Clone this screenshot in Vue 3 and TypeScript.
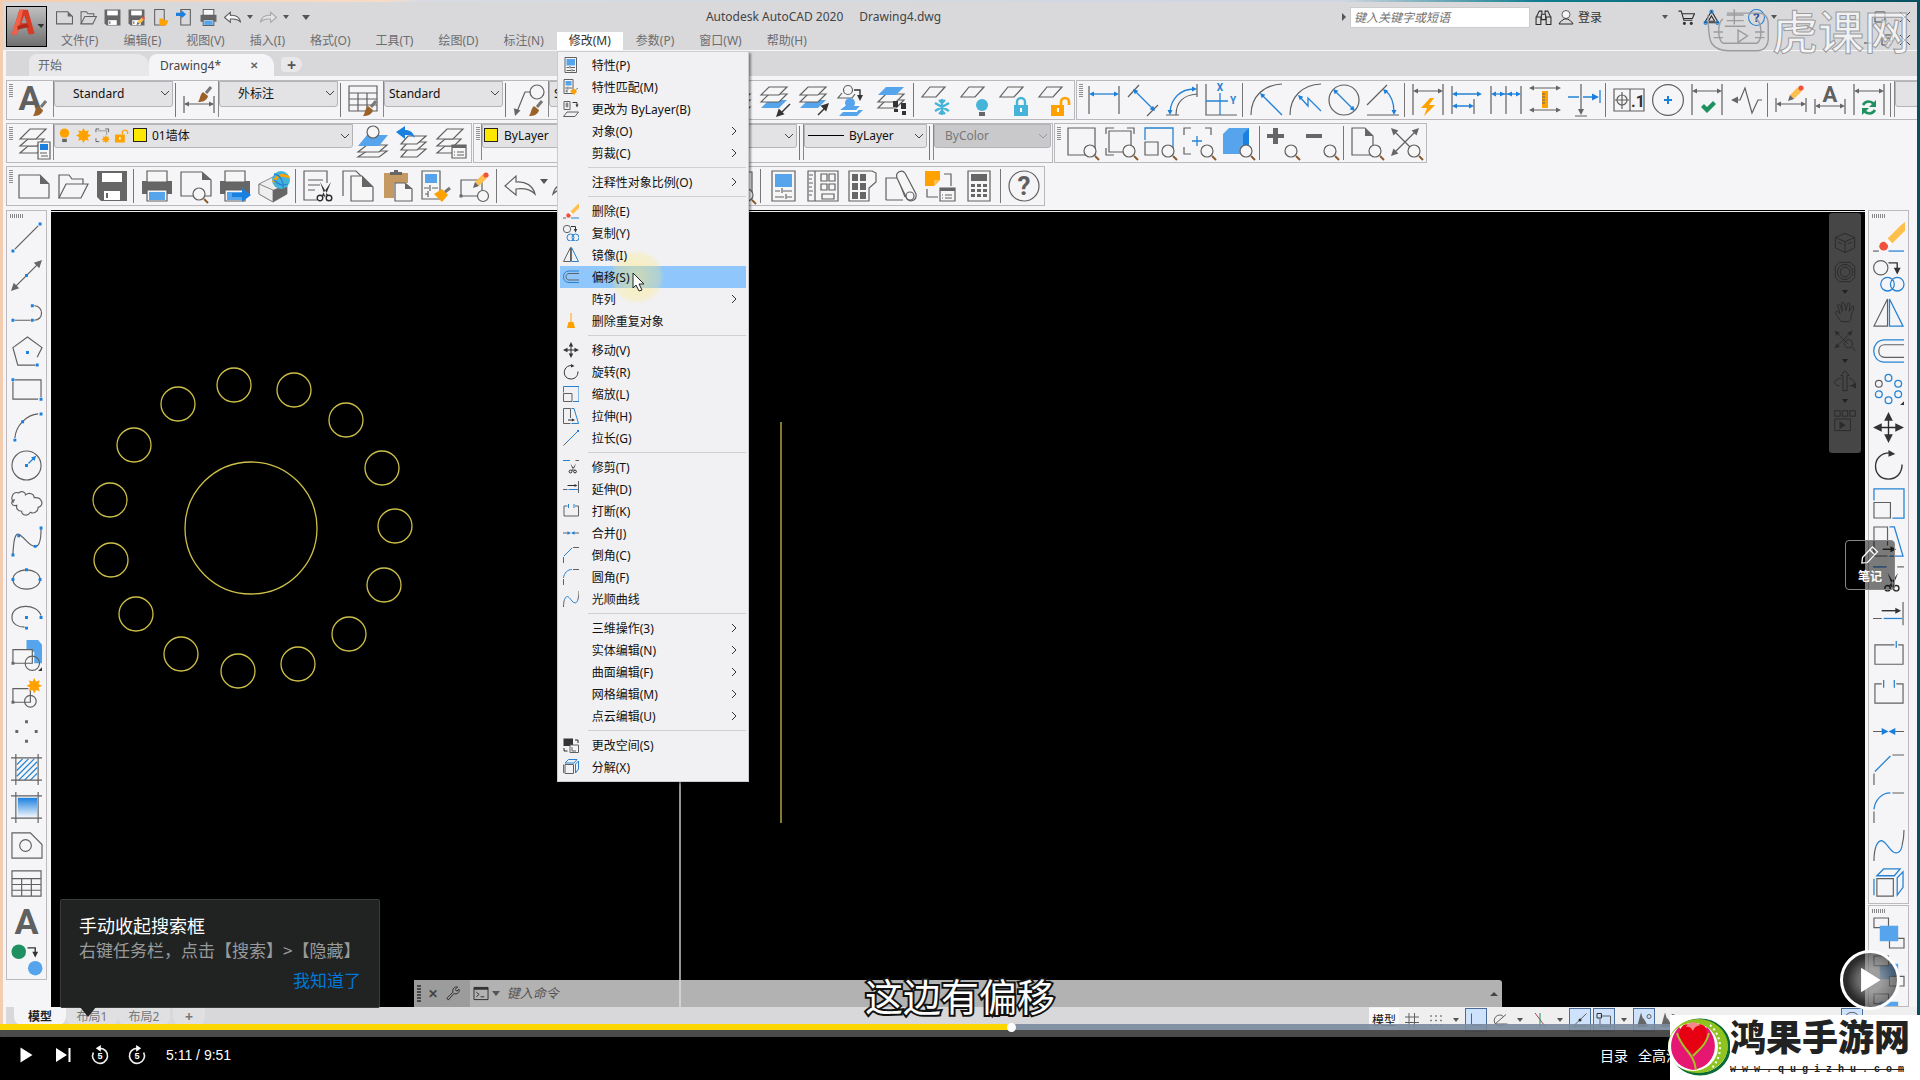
<script setup lang="ts">
import { h, ref } from 'vue'

type Shape = (string | number)[]
interface Combo { text: string; width: number; pad: number; lead?: string; disabled?: boolean }
type Tool = string | Combo
interface Entry { label: string; icon?: string; sub?: boolean; hot?: boolean }

const GREY = '#606060'
const BLUE = '#2482d4'
const paints: Record<string, Record<string, string | number>> = {
  k: { stroke: GREY, fill: 'none', 'stroke-width': 1.2 },
  d: { stroke: '#333', fill: 'none', 'stroke-width': 1.4 },
  b: { stroke: BLUE, fill: 'none', 'stroke-width': 1.3 },
  v: { stroke: '#fff', fill: 'none', 'stroke-width': 2 },
  n: { stroke: '#8a5a2a', fill: 'none', 'stroke-width': 2 },
  h: { stroke: '#777', fill: 'none', 'stroke-width': 3 },
  K: { fill: '#666' },
  D: { fill: '#333' },
  B: { fill: '#56a4ec' },
  U: { fill: '#1a80e0' },
  O: { fill: '#ffa200' },
  R: { fill: '#f0503c' },
  P: { fill: '#ffbf4d' },
  T: { fill: '#c49a62' },
  N: { fill: '#9a6128' },
  G: { fill: '#1f9160' },
  C: { fill: '#45b4d8' },
  c: { stroke: '#45b4d8', fill: 'none', 'stroke-width': 2.4 },
  o: { stroke: '#ffa200', fill: 'none', 'stroke-width': 2.6 },
  g: { stroke: '#1f9160', fill: 'none', 'stroke-width': 2.6 },
  r: { stroke: '#b04050', fill: 'none', 'stroke-width': 1.3 },
  W: { fill: '#f6f6f7', stroke: GREY, 'stroke-width': 1.2 },
  Q: { fill: '#eeeeef', stroke: '#888', 'stroke-width': 1 },
  F: { fill: '#fff' },
  m: { stroke: '#2b2b2b', fill: 'none', 'stroke-width': 1.4 },
  M: { fill: '#2b2b2b' },
}
const circ = (x: number, y: number, r: number) => `M${x - r} ${y}a${r} ${r} 0 1 0 ${2 * r} 0a${r} ${r} 0 1 0 ${-2 * r} 0z`
const head = (x: number, y: number, dx: number, dy: number, s = 5) => {
  const l = Math.hypot(dx, dy)
  const ux = (dx / l) * s
  const uy = (dy / l) * s
  return `M${x} ${y}L${x - ux - uy / 2} ${y - uy + ux / 2}L${x - ux + uy / 2} ${y - uy - ux / 2}z`
}
const dot = (x: number, y: number) => `M${x - 1.5} ${y - 1.5}h3v3h-3z`
const brush = (x: number, y: number): Shape[] => [
  ['h', `M${x + 13} ${y}L${x + 8} ${y + 6}`],
  ['N', `M${x + 5} ${y + 5}l5 4c-1 5-6 6-10 6c2-2 2-8 5-10z`],
]
const glass = (x: number, y: number, r = 6): Shape[] => [
  ['n', `M${x + r - 1} ${y + r - 1}l4 4`],
  ['W', circ(x, y, r)],
]
const pen = (x: number, y: number): Shape[] => [
  ['P', `M${x + 3} ${y + 9}L${x + 11} ${y + 1}l4 4L${x + 7} ${y + 13}z`],
  ['R', circ(x + 14, y + 2, 2.6)],
  ['K', `M${x + 3} ${y + 9}l4 4l-6 2z`],
]
const sheet = (y: number, paint = 'W'): Shape => [paint, `M10 ${y}h18l-8 8h-18z`]
const layers = (top = 'W', low = 'W'): Shape[] => [sheet(16, low), sheet(10), sheet(3, top)]
const flat: Shape = ['k', 'M9 3H24L15 13H1z']
const printer: Shape[] = [
  ['K', 'M1 11h30v13H1z'],
  ['W', 'M6 1h20v11H6z'],
  ['W', 'M6 20h20v11H6z'],
  ['B', 'M8 22h16v8H8z'],
]
const floppy: Shape[] = [
  ['K', 'M1 1h30v30H5l-4-4z'],
  ['F', 'M6 3h20v9H6z'],
  ['F', 'M8 21h16v9H8z'],
  ['K', 'M10 23h2v5h-2z'],
]
const zoomBox: Shape[] = [['k', 'M2 2H29V29H2z'], ...glass(24, 25)]
const sun = (x: number, y: number, r: number): Shape => {
  let d = ''
  for (let i = 0; i < 16; i++) {
    const a = (i * Math.PI) / 8
    const q = i % 2 ? r * 0.6 : r
    d += `${i ? 'L' : 'M'}${x + Math.cos(a) * q} ${y + Math.sin(a) * q}`
  }
  return ['O', d + 'z']
}
const shears = (x: number, y: number): Shape[] => [
  ['D', `M${x + 3} ${y}l8 13l-3 1zM${x + 14} ${y}l-9 13l3 2z`],
  ['m', circ(x + 3, y + 16, 2.8) + circ(x + 12, y + 16, 2.8)],
]
const bigLayers: Shape[] = [
  ['W', 'M10 20h16l-7 7H2z'],
  ['W', 'M10 13h16l-7 7H2z'],
  ['W', 'M12 3h16l-10 10H2z'],
]

const icons: Record<string, Shape[]> = {
  new: [['k', 'M1 5H22L31 14V28H1z'], ['K', 'M22 5v9h9z']],
  open: [['k', 'M2 28V5h10l3 4h11v5'], ['k', 'M2 28L9 14H31L24 28z']],
  save: floppy,
  saveas: [...floppy, ...pen(15, 15)],
  openweb: [['k', 'M5 1h18v29H5z'], ['O', 'M14 18h6l2 3h9l-4 10H14z']],
  saveweb: [['k', 'M9 1h18v29H9z'], ['U', 'M0 7h10V2l9 8l-9 8v-5H0z']],
  print: printer,
  preview: [['k', 'M1 2H22L31 10V26H1z'], ['K', 'M22 2v8h9z'], ...glass(19, 24)],
  publish: [...printer, ['U', 'M13 23h10v-5l9 7l-9 7v-5H13z']],
  globe: [
    ['Q', 'M1 14L15 7L29 14V24L15 32L1 24z'], ['Q', 'M1 14L15 20V32L1 24z'], ['K', 'M15 20l14-6v10l-14 8z'],
    ['C', circ(23, 10, 9)], ['o', 'M15 12c6-9 10-7 16-5'], ['b', 'M16 4c7 1 10 9 9 14M30 14c-6 2-9 1-14-4'],
  ],
  cut: [['k', 'M24 13V1H1V30H14M5 10h15M5 15h12M5 20h7'], ...shears(14, 12)],
  copyclip: [['k', 'M1 26V1H14L19 6'], ['W', 'M9 6H20L31 17V31H9z'], ['K', 'M20 6v11h11z']],
  paste: [['T', 'M3 3H27V13H13V28H3z'], ['K', 'M9 5V2h4V0h4v2h4v3z'], ['W', 'M14 13H24L31 19V31H14z'], ['K', 'M24 13v6h7z']],
  match: [
    ['W', 'M2 1h18v28H2z'], ['B', 'M5 4h12v9H5z'], ['k', 'M4 18h5M12 18h6M10 15v6M5 24h3M8 21v6'],
    ['O', 'M14 24l8-5l6 6l-6 7z'], ['h', 'M25 22l5-4'],
  ],
  blockedit: [['k', 'M2 10H23V26H2z'], ['K', dot(2, 26)], ['W', circ(24, 26, 5.5)], ...pen(13, 3)],
  undo: [['W', 'M1 16L12 6V12C22 11 29 16 31 24C26 19 20 18 12 19V25z']],
  redo: [['W', 'M31 16L20 6V12C10 11 3 16 1 24C6 19 12 18 20 19V25z']],
  props: [['W', 'M4 1H27V31H4z'], ['B', 'M7 4H24V17H7z'], ['k', 'M7 21h5M15 21h9M14 18v5M7 27h9M19 27h5M18 24v5']],
  design: [
    ['W', 'M1 1H31V31H1z'], ['k', 'M8 1V31M2 5h4M2 9h3M2 13h4M2 17h3M2 21h4M2 25h3M14 4h6v7h-6zM22 4h6v7h-6zM14 14h6v6h-6zM22 14h6v6h-6zM15 24h12v5H15z'],
  ],
  palettes: [
    ['W', 'M3 1H26l4 2v9l-7 6V31H3z'], ['K', 'M6 4h6v7H6zM14 4h6v7h-6zM6 13h6v7H6zM14 13h6v7h-6zM6 22h6v7H6zM14 22h6v7h-6z'],
  ],
  sheetset: [['k', 'M1 30V8H12M18 30H1M12 6L20 27'], ['W', 'M12 8C10 2 17-1 20 3L31 24C32 30 26 33 22 29z'], ['k', circ(25, 26, 4)]],
  markup: [['O', 'M1 1H16V10L10 16H1z'], ['P', 'M10 16v-6h6z'], ['k', 'M20 4H27V16M3 19V27H14'], ['W', 'M16 18H31V31H16z'], ['K', 'M16 18h15v3H16z'], ['k', 'M21 25h7M21 28h7M18 25h1M18 28h1']],
  calc: [
    ['W', 'M5 1H27V31H5z'], ['K', 'M8 4H24V11H8z'],
    ['K', 'M8 14h4v3H8zM14 14h4v3h-4zM20 14h4v3h-4zM8 19h4v3H8zM14 19h4v3h-4zM20 19h4v3h-4zM8 24h4v3H8zM14 24h4v3h-4zM20 24h4v3h-4z'],
  ],
  help: [['k', circ(16, 16, 15)], ['t', '?', 16, 25, 26, GREY]],
  textstyle: [['t', 'A', 12, 26, 34, GREY], ...brush(15, 17)],
  dimstyle: [['k', 'M1 12V29M31 12V29M2 20H30'], ['K', head(1, 20, -1, 0) + head(31, 20, 1, 0)], ...brush(15, 3)],
  tablestyle: [['k', 'M1 2H29V27H1zM1 9H29M1 15H29M1 21H29M10 9V27M19 9V27'], ...brush(15, 17)],
  leaderstyle: [['k', 'M3 30L12 8H18'], ['k', circ(24, 8, 7)], ['K', head(2, 32, -1, 3, 7)], ...brush(16, 17)],
  layerprops: [...bigLayers, ['W', 'M20 16h12v17H20z'], ['U', 'M22 18h8v6h-8z'], ['k', 'M22 27h7M23 30h7']],
  makecurrent: [['W', 'M10 25h20l-8 6H1z'], ['W', 'M10 19h20l-8 7H1z'], ['B', 'M10 9H31L22 20H1z'], ['W', circ(16, 6, 6)]],
  layerprev: [['W', 'M12 23h18l-9 8H5z'], ['W', 'M12 16h18l-9 8H5z'], ['W', 'M12 10h18l-9 8H5z'], ['U', 'M0 6L9 0V4C14 4 17 6 19 12C16 9 13 9 9 9V13z']],
  layerstates: [...bigLayers, ['W', 'M17 19H31V32H17z'], ['K', 'M17 19h14v3H17z'], ['k', 'M22 26h7M22 29h7M19 26h1M19 29h1']],
  layiso: [...layers('W', 'B'), ['d', 'M31 20L20 31'], ['D', head(17, 33, -1, 1, 8)]],
  layuniso: [...layers('W', 'B'), ['d', 'M20 31L28 23'], ['D', head(31, 19, 1, -1, 8)]],
  layfreeze: [['k', circ(11, 6, 4.5)], ['k', 'M5 9L1 14H15L18 10'], ['d', 'M17 6H23V14'], ['D', head(23, 17, 0, 1, 6)], ['B', 'M8 26h18l-6 6H2z'], ['F', 'M6 20h19l-5 8H2z'], ['B', 'M8 22h15l-4 4H3z'], ['B', circ(13, 19, 5)]],
  laywalk: [...layers('B'), ['D', 'M17 17h5v6h-5zM18 25h4v3h-4zM25 19h5v6h-5zM26 27h4v4h-4z']],
  frz: [flat, ['c', 'M21 15V31M14 19L28 27M28 19L14 27M18 16l3 3l3-3M18 30l3-3l3 3']],
  off: [flat, ['C', circ(22, 21, 6)], ['K', 'M19 28h6v4h-6z']],
  lock: [flat, ['c', 'M18 22V18a4 4 0 0 1 8 0v4'], ['C', 'M15 21h14v11H15z'], ['F', 'M21 24h2v4h-2z']],
  unlock: [flat, ['o', 'M23 22V18a4 4 0 0 1 8 0v3'], ['O', 'M13 21h13v11H13z'], ['F', 'M19 24h2v4h-2z']],
  dimlinear: [['k', 'M1 2V30M31 2V30'], ['b', 'M3 10H29'], ['U', head(1, 10, -1, 0) + head(31, 10, 1, 0)]],
  dimaligned: [['k', 'M1 13L12 1M20 32L31 21'], ['b', 'M8 7L26 25'], ['U', head(6, 5, -1, -1) + head(28, 27, 1, 1)]],
  dimarc: [['k', 'M31 0V13M0 31H13M10 31C10 18 18 11 31 10'], ['b', 'M4 28C5 14 15 5 28 5'], ['U', head(4, 31, 0, 1) + head(31, 5, 1, 0)]],
  ordinate: [['k', 'M1 0V31H32'], ['b', 'M1 17H23M15 9V31'], ['t', 'X', 15, 7, 10, BLUE], ['t', 'Y', 28, 20, 10, BLUE]],
  dimradius: [['k', 'M1 31C1 12 14 1 32 0'], ['b', 'M12 11L32 31'], ['U', head(10, 9, -1, -1)]],
  dimjog: [['k', 'M1 31C1 12 14 1 32 0'], ['b', 'M10 12L19 22V14L32 27'], ['U', head(9, 11, -1, -1)]],
  dimdiam: [['k', circ(16, 16, 15)], ['b', 'M7 7L25 25'], ['U', head(5, 5, -1, -1) + head(27, 27, 1, 1)]],
  dimangle: [['k', 'M0 21L20 1M0 31H32'], ['b', 'M18 6C25 12 27 20 27 28'], ['U', head(16, 5, -1, -1) + head(27, 31, 0, 1)]],
  quickdim: [['k', 'M1 0V31M31 0V31M3 7H29'], ['K', head(1, 7, -1, 0) + head(31, 7, 1, 0)], ['O', 'M18 14L9 24h6l-3 8l11-11h-6l5-7z']],
  baseline: [['k', 'M1 2V30M23 15V30'], ['b', 'M3 10H28M3 22H21'], ['U', head(1, 10, -1, 0) + head(31, 10, 1, 0) + head(1, 22, -1, 0) + head(23, 22, 1, 0)]],
  continue: [['k', 'M1 2V30M16 2V30M31 2V30'], ['b', 'M3 10H29'], ['U', head(1, 10, -1, 0) + head(15, 10, 1, 0) + head(17, 10, -1, 0) + head(31, 10, 1, 0)]],
  dimspace: [['k', 'M3 4H29M3 26H29'], ['K', head(0, 4, -1, 0) + head(32, 4, 1, 0) + head(0, 26, -1, 0) + head(32, 26, 1, 0)], ['O', 'M13 7h6v17h-6z'], ['k', 'M13 10h3M13 13h3M13 16h3M13 19h3']],
  dimbreak: [['k', 'M13 0V28M7 32H19'], ['b', 'M0 13H11M15 13H28M32 6V19'], ['U', head(31, 13, 1, 0, 7)], ['K', head(13, 31, 0, 1, 6)]],
  tolerance: [['k', 'M1 5H31V27H1zM17 5V27M9 8V25M2 16H16'], ['k', circ(9, 16, 5)], ['t', '.1', 25, 23, 16, '#333']],
  center: [['k', circ(16, 16, 15.4)], ['U', 'M15 12h2v3h3v2h-3v3h-2v-3h-3v-2h3z']],
  inspect: [['k', 'M1 0V31M31 0V31M3 7H29'], ['K', head(1, 7, -1, 0) + head(31, 7, 1, 0)], ['G', 'M10 23l3-3l3 3l6-6l3 3l-9 9z']],
  joglinear: [['k', 'M4 16H10L15 4L22 29L28 16H32'], ['K', head(1, 16, -1, 0, 7)]],
  dimedit: [['k', 'M1 14V28M31 14V28M3 20H29'], ['K', head(1, 20, -1, 0) + head(31, 20, 1, 0)], ...pen(12, 2)],
  dimtext: [['k', 'M1 15V30M31 15V30M3 22H29'], ['K', head(1, 22, -1, 0) + head(31, 22, 1, 0)], ['t', 'A', 16, 18, 22, GREY]],
  dimupdate: [['k', 'M1 0V31M31 0V31M3 7H29'], ['K', head(1, 7, -1, 0) + head(31, 7, 1, 0)], ['g', 'M10 21C13 16 18 17 21 20M22 26C19 31 14 30 11 27'], ['G', 'M23 16v7h-7zM9 31v-7h7z']],
  zwindow: zoomBox,
  zdynamic: [['k', 'M1 8V2H9M22 2H29V8M1 22V29H9M4 5H26V26H4z'], ...glass(24, 25)],
  zscale: [['b', 'M1 14V2H29V27'], ['k', 'M1 16H14V29H1z'], ...glass(24, 25)],
  zcenter: [['k', 'M1 9V2H8M22 2H28V9M1 21V28H8'], ['b', 'M14 10V20M9 15H19'], ...glass(24, 25)],
  zobject: [['B', 'M1 8L7 2H27V21L21 28H1z'], ['U', 'M21 8L27 2V21L21 28z'], ...glass(24, 25)],
  zin: [['K', 'M6 2h5v6h6v4h-6v6H6v-6H0V8h6z'], ...glass(24, 25)],
  zout: [['K', 'M0 8h16v4H0z'], ...glass(24, 25)],
  zall: [['k', 'M1 2H14L22 10V29H1z'], ['K', 'M14 2v8h8z'], ...glass(24, 25)],
  zextents: [['k', 'M4 5L26 27M26 5L4 27'], ['K', head(1, 2, -1, -1, 7) + head(29, 2, 1, -1, 7) + head(1, 30, -1, 1, 7)], ...glass(24, 25)],
  line: [['k', 'M4 28L28 4'], ['U', dot(2, 30) + dot(30, 2)]],
  lengthen: [['k', 'M1 31L10 22'], ['b', 'M10 22L30 2'], ['U', 'M28 0h4v4h-4z']],
  xline: [['k', 'M4 28L28 4'], ['K', head(0, 32, -1, 1, 8) + head(32, 0, 1, -1, 8)], ['U', dot(16, 16)]],
  pline: [['k', 'M4 23H20M24 23C34 23 34 8 24 8'], ['U', dot(2, 23) + dot(22, 23) + dot(22, 8)]],
  polygon: [['k', 'M27 22L32 12L17 1L2 12L7 30H25'], ['U', dot(17, 17) + dot(27, 30)]],
  rect: [['k', 'M4 6H31V24M28 26H2V8'], ['U', dot(2, 6) + dot(31, 26)]],
  arc: [['k', 'M4 27C5 14 16 3 28 2'], ['U', dot(4, 29) + dot(12, 10) + dot(31, 2)]],
  circle: [['k', circ(16, 16, 15)], ['b', 'M18 14L24 8'], ['U', dot(16, 16) + head(26, 6, 1, -1)]],
  cloud: [['k', 'M3 15C-1 12 1 3 8 5C12 2 15 5 15 7C19 4 24 6 24 10C32 9 35 18 28 20C28 25 23 27 20 25C17 30 11 28 11 24C7 24 5 21 6 18C0 19-1 14 4 12']],
  spline: [['k', 'M2 29C3 8 6 7 9 9C16 14 19 21 25 21C31 21 31 8 31 3'], ['U', dot(2, 30) + dot(8, 10) + dot(25, 21) + dot(31, 2)]],
  ellipse: [['k', 'M2 16a14 10 0 1 0 28 0a14 10 0 1 0-28 0'], ['U', dot(2, 16) + dot(16, 6) + dot(30, 16)]],
  earc: [['k', 'M31 14C27 1 1 1 1 16C1 23 8 26 14 26'], ['U', dot(16, 16) + dot(31, 16) + dot(16, 27)]],
  insert: [['B', 'M16 0H28L32 5V24H24V12H16z'], ['W', 'M2 10H22V24H2z'], ['K', dot(2, 24)], ['k', circ(22, 24, 7.4)], ['D', 'M32 28v4h-4z']],
  block: [['k', 'M18 11H2V25H20V13M2 25H20'], ['K', dot(2, 25)], ['k', circ(20, 24, 6)], sun(24, 8, 8)],
  point: [['K', dot(16, 6) + dot(6, 16) + dot(26, 16) + dot(16, 26)]],
  hatch: [['b', 'M6 11L12 5M6 17L18 5M6 23L24 5M8 27L27 8M14 27L27 14M20 27L27 20'], ['k', 'M5 0V32M28 0V32M0 4H32M0 27H32']],
  gradient: [['grad', 'M7 6H27V26H7z'], ['k', 'M5 0V32M28 0V32M0 4H32M0 27H32']],
  region: [['k', 'M1 3H20L32 15V29H1z'], ['k', circ(15, 16, 6)]],
  table: [['k', 'M1 3H31V29H1zM1 11H31M1 17H31M1 23H31M11 11V29M21 11V29']],
  mtext: [['t', 'A', 16, 29, 37, GREY]],
  addsel: [['G', circ(8, 8, 7.5)], ['B', circ(25, 25, 7.5)], ['d', 'M17 4H25V10'], ['D', head(25, 14, 0, 1, 6)]],
  erase: [['P', 'M14 18L29 3L33 0V9L19 23z'], ['R', circ(11, 25, 4.5)], ['F', 'M12 20l3-3l5 5l-3 3z'], ['k', 'M0 30H6'], ['b', 'M16 30H32']],
  copy: [['k', circ(8, 8, 7.4)], ['d', 'M16 3H25V10'], ['D', head(25, 15, 0, 1, 7)], ['b', circ(25, 25, 7) + circ(15, 25, 7)]],
  mirror: [['k', 'M15 1V29H1z'], ['b', 'M17 1V29H31z']],
  offset: [['b', 'M32 4H12C-3 4-3 27 12 27H32'], ['k', 'M32 9H12C4 9 4 22 12 22H32']],
  array: [['b', circ(16, 4, 3.5) + circ(26, 10, 3.5) + circ(26, 21, 3.5) + circ(16, 27, 3.5) + circ(6, 21, 3.5)], ['k', circ(6, 10, 3.5)], ['D', 'M32 28v4h-4z']],
  move: [['m', 'M16 4V28M4 16H28'], ['D', head(16, 0, 0, -1, 9) + head(16, 32, 0, 1, 9) + head(0, 16, -1, 0, 9) + head(32, 16, 1, 0, 9)]],
  rotate: [['d', 'M17 3C-2 3-2 30 16 30C25 30 30 23 30 15'], ['D', 'M16 0v7l7-3z']],
  scale: [['b', 'M1 13V1H32V31H20'], ['k', 'M1 15H18V31H1z']],
  stretch: [['k', 'M15 31H1V1H15V20'], ['b', 'M17 1H22L31 31H17'], ['m', 'M10 24H20'], ['D', head(24, 24, 1, 0, 6)]],
  trim: [['b', 'M0 3H14'], ['k', 'M25 3H32'], ...shears(12, 9)],
  extend: [['m', 'M9 9H26'], ['D', head(29, 9, 1, 0, 6)], ['k', 'M31 0V24M0 17H9'], ['b', 'M11 17H30']],
  breakpt: [['k', 'M22 5H2V25H31V5H26'], ['b', 'M24 1V8']],
  break: [['k', 'M9 6H2V26H31V6H24'], ['b', 'M11 2V10M22 2V10']],
  join: [['k', 'M0 16H11M21 16H32'], ['U', head(16, 16, 1, 0, 7) + head(16, 16, -1, 0, 7)]],
  chamfer: [['k', 'M1 20V32M20 1H32'], ['b', 'M2 18L18 2']],
  fillet: [['k', 'M1 20V32M20 1H32'], ['b', 'M1 18C2 8 9 1 18 1']],
  blend: [['k', 'M1 32C1 25 2 20 3 17M32 0C32 8 31 12 30 16'], ['b', 'M3 17C8 5 13 14 18 20C24 27 29 23 30 16']],
  explode: [['b', 'M4 8L11 1H28L22 8zM25 10L31 4V20L25 28zM1 11V28'], ['k', 'M4 11H21V29H4z']],
  front: [['k', 'M1 1H16V11H1z'], ['k', 'M17 22H32V32H17z'], ['B', 'M7 9H26V25H7z']],
  back: [['B', 'M7 9H26V25H7z'], ['W', 'M1 1H16V11H1z'], ['W', 'M17 22H32V32H17z']],
  bylayer: [['W', 'M2 1H14V17H2z'], ['d', 'M19 3H28V9'], ['D', head(28, 13, 0, 1, 6)], ['k', 'M5 6h6M5 10h6M8 3v10M8 22H31L24 31H1z']],
  sweep: [['o', 'M16 0V18'], ['O', 'M11 18h10l3 12H8z']],
  space: [['D', 'M1 3H20V18H1z'], ['W', 'M14 16H31V31H14z'], ['m', 'M24 6H30V12M2 22V28H9'], ['k', 'M18 20v8h8']],
  binoc: [['m', 'M3 14L8 4h5v6h6V4h5l5 10M2 15h9v14H2zM21 15h9v14h-9zM12 10v10h8V10']],
  user: [['W', circ(16, 11, 8)], ['m', 'M2 30C4 24 10 23 12 20H20C22 23 28 24 30 30z']],
  cart: [['m', 'M1 4h5l5 17h16M8 9h23l-4 9H10'], ['D', circ(12, 27, 3) + circ(25, 27, 3)]],
  a360: [['m', 'M16 4L29 26H3zM16 13l6 10H10z'], ['b', circ(16, 5, 3) + circ(5, 26, 3) + circ(27, 26, 3)]],
  helpblue: [['b', circ(16, 16, 15)], ['t', '?', 16, 25, 24, '#2a4b9a']],
  bulb: [['O', circ(16, 11, 10)], ['K', 'M11 23h10v7H11z']],
  sunny: [sun(16, 16, 16), ['O', circ(16, 16, 9)]],
  vpfreeze: [['m', 'M2 9V2H9M22 2H29V9M2 22V29H9'], ['k', 'M6 6H25V15'], sun(23, 24, 9)],
  padlock: [['o', 'M18 14V8a6 6 0 0 1 11 0v5'], ['O', 'M2 14H23V31H2z'], ['F', 'M11 19h3v6h-3z']],
  wrench: [['m', 'M4 26L17 13C15 6 20 1 27 2L22 7L25 11L30 7C32 14 25 19 19 16L7 30z']],
  prompt: [['m', 'M1 3H31V29H1z'], ['D', 'M1 3h30v5H1z'], ['m', 'M6 13l6 5l-6 5M15 23h8']],
  grid: [['k', 'M10 2V30M21 2V30M2 10H30M2 21H30']],
  snap: [['K', dot(6, 8) + dot(16, 8) + dot(26, 8) + dot(6, 17) + dot(16, 17) + dot(26, 17) + dot(6, 26) + dot(16, 26) + dot(26, 26)]],
  ortho: [['k', 'M7 3V26H29']],
  polar: [['k', 'M28 5L6 24H31'], ['k', 'M23 9A11 11 0 1 0 24 24']],
  iso: [['r', 'M6 2L27 30'], ['g', 'M16 2V30']],
  track: [['k', 'M3 28L29 3M3 28H30'], ['D', circ(16, 16, 3)]],
  osnap: [['k', 'M9 8H29V29H8V13'], ['d', 'M2 3h9v9H2z']],
  annot: [['K', 'M10 1l9 29H2zM15 12l10 18H10z'], ['k', circ(26, 9, 4)]],
  cube: [['m', 'M16 2L30 8V23L16 30L2 23V8zM2 8L16 14L30 8M16 14V30M6 15l5 2M20 17l6-2']],
  wheel: [['m', circ(16, 16, 7) + circ(16, 16, 11)], ['m', 'M8 2H24L30 8V24L24 30H8L2 24V8z']],
  hand: [['m', 'M10 30C7 24 3 21 2 16C4 13 7 17 9 19L5 6C7 3 10 6 12 15L11 3C13 0 16 1 17 14L20 3C23 1 24 4 22 15L27 7C30 7 29 11 25 20C25 26 24 28 22 30z']],
  orbit: [['m', 'M13 30V8H10L16 1L22 8H19V30zM10 12C-2 14-2 22 8 23M22 12C33 15 32 23 22 23'], ['M', head(24, 23, -1, 0, 8)]],
  motion: [['m', 'M1 1H9V9H1zM12 1H20V9H12zM23 1H31V9H23zM1 13H24V30H1z'], ['M', 'M8 16l9 6l-9 6z']],
  navzoom: [['m', 'M4 4L20 20M24 4L4 24'], ['M', head(1, 1, -1, -1, 7) + head(27, 1, 1, -1, 7) + head(1, 27, -1, 1, 7)], ['m', circ(21, 20, 6)], ['m', 'M26 25l5 5']],
  notepen: [['v', 'M4 20L20 3L28 11L12 28L3 29zM16 8l8 8']],
  play: [['F', 'M5 1L29 16L5 31z']],
  next: [['F', 'M2 2L24 16L2 30zM27 2h4v28h-4z']],
}

const Icon = (props: { name: string }) =>
  h('svg', { viewBox: '0 0 32 32', 'aria-hidden': 'true' }, [
    props.name === 'gradient'
      ? h('defs', [h('linearGradient', { id: 'fade', x2: '0', y2: '1' }, [h('stop', { 'stop-color': '#1a80e0' }), h('stop', { offset: '1', 'stop-color': '#f2f6fc' })])])
      : null,
    ...(icons[props.name] ?? []).map((s) => {
      if (s[0] === 't') {
        return h('text', { x: s[2], y: s[3], 'font-size': s[4], fill: s[5], 'text-anchor': 'middle', 'font-weight': 700, 'font-family': 'Roboto, sans-serif' }, String(s[1]))
      }
      if (s[0] === 'grad') return h('path', { d: s[1], fill: 'url(#fade)' })
      return h('path', { d: s[1], ...paints[String(s[0])] })
    }),
  ])
Icon.props = ['name']

const quick = ['new', 'open', 'save', 'saveas', 'openweb', 'saveweb', 'print']
const menusLeft = ['文件(F)', '编辑(E)', '视图(V)', '插入(I)', '格式(O)', '工具(T)', '绘图(D)', '标注(N)']
const menusRight = ['参数(P)', '窗口(W)', '帮助(H)']

const combo = (text: string, width: number, pad: number, lead = '', disabled = false): Combo => ({ text, width, pad, lead, disabled })
const rows: Tool[][][] = [
  [
    ['textstyle', combo('Standard', 120, 18), '|', 'dimstyle', combo('外标注', 120, 18), '|', 'tablestyle', combo('Standard', 120, 4), '|', 'leaderstyle',
      combo('Standard', 123, 4), '|', 'layerstates', 'layerprev', 'layiso', 'layuniso', 'layfreeze', 'laywalk', '|', 'frz', 'off', 'lock', 'unlock'],
    ['dimlinear', 'dimaligned', 'dimarc', 'ordinate', '|', 'dimradius', 'dimjog', 'dimdiam', 'dimangle', '|', 'quickdim', 'baseline', 'continue', 'dimspace', 'dimbreak', '|',
      'tolerance', 'center', 'inspect', 'joglinear', '|', 'dimedit', 'dimtext', 'dimupdate', '|', combo('', 120, 4)],
  ],
  [
    ['layerprops', combo('01墙体', 300, 97, 'layer'), 'makecurrent', 'layerprev', 'layerstates'],
    [combo('ByLayer', 158, 21, 'swatch'), '|', combo('', 152, 4), '|', combo('ByLayer', 124, 44, 'line'), '|', combo('ByColor', 118, 10, '', true)],
    ['zwindow', 'zdynamic', 'zscale', 'zcenter', 'zobject', '|', 'zin', 'zout', '|', 'zall', 'zextents'],
  ],
  [
    ['new', 'open', 'save', '|', 'print', 'preview', 'publish', 'globe', '|', 'cut', 'copyclip', 'paste', 'match', 'blockedit', '|', 'undo', 'v', 'redo', 'v', '|',
      'zextents', 'zin', 'zdynamic', 'zwindow', '|', 'props', 'design', 'palettes', 'sheetset', 'markup', 'calc', '|', 'help'],
  ],
]
const drawTools = ['line', 'xline', 'pline', 'polygon', 'rect', 'arc', 'circle', 'cloud', 'spline', 'ellipse', 'earc', 'insert', 'block', 'point', 'hatch', 'gradient', 'region', 'table', 'mtext', 'addsel']
const editTools = ['erase', 'copy', 'mirror', 'offset', 'array', 'move', 'rotate', 'scale', 'stretch', 'trim', 'extend', 'breakpt', 'break', 'join', 'chamfer', 'fillet', 'blend', 'explode']
const orderTools = ['front', 'back', 'front']

const e = (label: string, icon = '', sub = false, hot = false): Entry => ({ label, icon, sub, hot })
const sections: Entry[][] = [
  [e('特性(P)', 'props'), e('特性匹配(M)', 'match'), e('更改为 ByLayer(B)', 'bylayer'), e('对象(O)', '', true), e('剪裁(C)', '', true)],
  [e('注释性对象比例(O)', '', true)],
  [e('删除(E)', 'erase'), e('复制(Y)', 'copy'), e('镜像(I)', 'mirror'), e('偏移(S)', 'offset', false, true), e('阵列', '', true), e('删除重复对象', 'sweep')],
  [e('移动(V)', 'move'), e('旋转(R)', 'rotate'), e('缩放(L)', 'scale'), e('拉伸(H)', 'stretch'), e('拉长(G)', 'lengthen')],
  [e('修剪(T)', 'trim'), e('延伸(D)', 'extend'), e('打断(K)', 'break'), e('合并(J)', 'join'), e('倒角(C)', 'chamfer'), e('圆角(F)', 'fillet'), e('光顺曲线', 'blend')],
  [e('三维操作(3)', '', true), e('实体编辑(N)', '', true), e('曲面编辑(F)', '', true), e('网格编辑(M)', '', true), e('点云编辑(U)', '', true)],
  [e('更改空间(S)', 'space'), e('分解(X)', 'explode')],
]

const holes = [[183, 174], [243, 179], [295, 209], [331, 257], [344, 315], [333, 374], [298, 423], [247, 453], [187, 460], [130, 443], [85, 403], [60, 349], [59, 289], [83, 234], [127, 193]]
const progress = ref(527)
const command = ref('')
const keyword = ref('')
const isCombo = (t: Tool): t is Combo => typeof t !== 'string'
</script>

<template>
  <main class="screen">
    <div class="cad">
      <header class="head">
        <button class="logo" aria-label="应用程序菜单">
          <svg viewBox="0 0 41 41" aria-hidden="true">
            <path d="M5 29L13 3h9l7 25-6 1-3-9h-7l-2 9z" fill="#d93a25" />
            <path d="M13 3h4l-4 17-2 9-6 0z" fill="#f0614a" />
            <path d="M18 9l3 8h-6z" fill="#999" />
            <path d="M11 20l10-3 2 4-12 3z" fill="#b02a1a" />
            <path d="M32 18h7l-3 4z" fill="#333" />
          </svg>
        </button>
        <div class="headrows">
          <div class="titlebar">
            <div class="quick">
              <button v-for="q in quick" :key="q" class="mini" :aria-label="q"><Icon :name="q" /></button>
              <button class="mini" aria-label="undo"><Icon name="undo" /></button>
              <i class="caret"></i>
              <button class="mini faint" aria-label="redo"><Icon name="redo" /></button>
              <i class="caret"></i>
              <i class="caret more"></i>
            </div>
            <h1>Autodesk AutoCAD 2020<span>Drawing4.dwg</span></h1>
            <div class="account">
              <i class="caret east"></i>
              <input v-model="keyword" class="search" type="text" placeholder="键入关键字或短语" aria-label="键入关键字或短语" />
              <button class="mini" aria-label="搜索"><Icon name="binoc" /></button>
              <button class="login"><Icon name="user" />登录</button>
              <i class="caret"></i>
              <button class="mini" aria-label="cart"><Icon name="cart" /></button>
              <button class="mini" aria-label="a360"><Icon name="a360" /></button>
              <button class="mini gap" aria-label="help"><Icon name="helpblue" /></button>
              <i class="caret"></i>
              <button class="win first" aria-label="最小化"><svg viewBox="0 0 12 12"><path d="M1 9H10" /></svg></button>
              <button class="win" aria-label="最大化"><svg viewBox="0 0 12 12"><path d="M1 1H11V11H1z" /></svg></button>
              <button class="win" aria-label="关闭"><svg viewBox="0 0 12 12"><path d="M1 1L11 11M11 1L1 11" /></svg></button>
            </div>
          </div>
          <nav class="menubar">
            <button v-for="m in menusLeft" :key="m">{{ m }}</button>
            <div class="opened">
              <button class="on">修改(M)</button>
              <div class="drop">
                <div v-for="(s, i) in sections" :key="i" class="sect">
                  <button v-for="it in s" :key="it.label" class="entry" :class="{ hot: it.hot }">
                    <span class="slot"><Icon v-if="it.icon" :name="it.icon" /></span>
                    <span class="name">{{ it.label }}</span>
                    <svg v-if="it.sub" class="more" viewBox="0 0 6 8"><path d="M1 0L5 4L1 8" /></svg>
                  </button>
                </div>
                <div class="glow"></div>
                <svg class="pointer" viewBox="0 0 13 20"><path d="M1 1V16L4 13L7 19L10 18L7 12H12z" /></svg>
              </div>
            </div>
            <button v-for="m in menusRight" :key="m">{{ m }}</button>
            <div class="docwin">
              <button class="win" aria-label="最小化文档"><svg viewBox="0 0 12 12"><path d="M1 9H8" /></svg></button>
              <button class="win" aria-label="还原文档"><svg viewBox="0 0 12 12"><path d="M4 4V1H12V7H9M1 4H9V11H1z" /></svg></button>
              <button class="win" aria-label="关闭文档"><svg viewBox="0 0 12 12"><path d="M1 1L11 11M11 1L1 11" /></svg></button>
            </div>
          </nav>
        </div>
      </header>

      <div class="doctabs">
        <button class="doctab">开始</button>
        <button class="doctab current">Drawing4*<b>✕</b></button>
        <button class="plus" aria-label="新图形">+</button>
      </div>

      <section class="bars">
        <div v-for="(row, r) in rows" :key="r" class="barrow">
          <div v-for="(group, g) in row" :key="g" class="bar">
            <i class="grip"></i>
            <template v-for="(t, k) in group" :key="k">
              <div v-if="isCombo(t)" class="combo" :class="{ off: t.disabled }" :style="{ width: t.width + 'px' }">
                <select :disabled="t.disabled" :style="{ paddingLeft: t.pad + 'px' }" aria-label="样式"><option>{{ t.text }}</option></select>
                <div v-if="t.lead === 'layer'" class="lead layer">
                  <Icon name="bulb" /><Icon name="sunny" /><Icon name="vpfreeze" /><Icon name="padlock" /><i class="swatch"></i>
                </div>
                <div v-else-if="t.lead === 'swatch'" class="lead"><i class="swatch"></i></div>
                <div v-else-if="t.lead === 'line'" class="lead"><i class="rule"></i></div>
                <svg class="chev" viewBox="0 0 8 5"><path d="M0 0L4 4L8 0" /></svg>
              </div>
              <i v-else-if="t === '|'" class="sep"></i>
              <button v-else-if="t === 'v'" class="tiny" aria-label="更多"><i class="caret big"></i></button>
              <button v-else class="tool" :aria-label="t"><Icon :name="t" /></button>
            </template>
          </div>
        </div>
      </section>

      <section class="work">
        <div class="side">
          <div class="rail">
            <i class="griph"></i>
            <button v-for="t in drawTools" :key="t" :aria-label="t"><Icon :name="t" /></button>
          </div>
        </div>
        <div class="canvas">
          <svg class="drawing" aria-hidden="true">
            <circle v-for="(p, i) in holes" :key="i" :cx="p[0]" :cy="p[1]" r="17" />
            <circle cx="200" cy="317" r="66" />
            <path d="M730 211V612" />
          </svg>
          <div class="navbar">
            <Icon name="cube" /><Icon name="wheel" /><i class="caret"></i><Icon name="hand" /><Icon name="navzoom" /><i class="caret"></i><Icon name="orbit" /><i class="caret"></i><Icon name="motion" />
          </div>
          <label class="cmd">
            <span class="cmdhead"><i class="grip"></i><b>✕</b><Icon name="wrench" /></span>
            <Icon name="prompt" /><i class="caret big"></i>
            <input v-model="command" type="text" placeholder="键入命令" />
            <i class="caret up"></i>
          </label>
          <svg class="drawing cross" aria-hidden="true"><path d="M629 560V800" /></svg>
        </div>
        <div class="side right">
          <div class="rail">
            <i class="griph"></i>
            <button v-for="t in editTools" :key="t" :aria-label="t"><Icon :name="t" /></button>
          </div>
          <div class="rail cutoff">
            <i class="griph"></i>
            <button v-for="(t, i) in orderTools" :key="i" :aria-label="t"><Icon :name="t" /></button>
          </div>
        </div>
      </section>

      <footer class="status">
        <button class="sheet now">模型</button>
        <button class="sheet">布局1</button>
        <button class="sheet">布局2</button>
        <button class="sheet add" aria-label="新布局">+</button>
        <div class="toggles">
          <button class="model">模型</button>
          <button aria-label="grid"><Icon name="grid" /></button>
          <button aria-label="snap"><Icon name="snap" /></button><i class="caret"></i>
          <button class="lit" aria-label="ortho"><Icon name="ortho" /></button>
          <button aria-label="polar"><Icon name="polar" /></button><i class="caret"></i>
          <button aria-label="iso"><Icon name="iso" /></button><i class="caret"></i>
          <button class="lit" aria-label="track"><Icon name="track" /></button>
          <button class="lit" aria-label="osnap"><Icon name="osnap" /></button><i class="caret"></i>
          <button class="lit" aria-label="annotation"><Icon name="annot" /></button>
          <button aria-label="scale"><Icon name="annot" /></button>
          <span class="rest"><button class="lit" aria-label="hardware"><Icon name="center" /></button></span>
        </div>
      </footer>
    </div>

    <div class="scrub">
      <input v-model="progress" type="range" min="0" max="1000" aria-label="播放进度" :style="{ '--done': Number(progress) / 10 + '%' }" />
    </div>
    <div class="player">
      <button aria-label="播放"><Icon name="play" /></button>
      <button aria-label="下一节"><Icon name="next" /></button>
      <button aria-label="后退5秒"><svg viewBox="0 0 24 24"><path d="M4 9a9 9 0 1 0 8-5" /><path class="solid" d="M13 0v8L7 4z" /><text x="12" y="17">5</text></svg></button>
      <button aria-label="前进5秒"><svg viewBox="0 0 24 24"><path d="M20 9a9 9 0 1 1-8-5" /><path class="solid" d="M11 0v8l6-4z" /><text x="12" y="17">5</text></svg></button>
      <span class="time">5:11 / 9:51</span>
      <div class="choices"><a href="#">目录</a><a href="#">全高清</a></div>
    </div>

    <div class="brand" aria-hidden="true">
      <svg viewBox="0 0 70 50">
        <path d="M2 8C3 20 2 32 6 38C10 44 16 46 24 46H54C62 46 66 40 66 34V18C66 10 62 6 56 6H22" />
        <path d="M18 12C12 16 12 34 18 38H54C60 36 60 14 52 12M30 2V18M22 8H40M22 14H40M20 20H42M8 26H18M8 32H18M52 26H62M52 32H62M34 24L44 30L34 37z" />
      </svg>
      <span>虎课网</span>
    </div>

    <aside class="tip">
      <h2>手动收起搜索框</h2>
      <p>右键任务栏，点击【搜索】&gt;【隐藏】</p>
      <button>我知道了</button>
    </aside>

    <p class="caption">这边有偏移</p>
    <button class="note"><Icon name="notepen" />笔记</button>
    <button class="bigplay" aria-label="播放"><Icon name="play" /></button>

    <div class="site">
      <svg viewBox="0 0 66 60" aria-hidden="true">
        <ellipse cx="36" cy="31" rx="29" ry="27" fill="#fff" stroke="#0b6b34" stroke-width="3" />
        <ellipse cx="34" cy="30" rx="30" ry="27" fill="#8fc31f" />
        <path d="M46 9C58 20 60 38 48 52" fill="none" stroke="#fff" stroke-width="2" stroke-dasharray="2 3" />
        <ellipse cx="29" cy="31" rx="25" ry="24" fill="#fff" />
        <path d="M15 11C2 24 4 50 29 54C54 50 56 24 43 11L29 28z" fill="#e61673" />
        <path d="M29 38C18 28 12 22 17 12C21 6 27 8 29 13C32 7 39 7 42 12C45 22 39 30 29 38z" fill="#e60012" />
        <path d="M22 11C24 5 33 5 36 10C33 9 30 12 29 15C27 11 25 10 22 11z" fill="#f7868c" />
        <path d="M13 17C18 34 30 36 32 54M45 17C42 30 34 34 29 40" fill="none" stroke="#a4c520" stroke-width="2" />
      </svg>
      <div class="sitetext">
        <strong>鸿果手游网</strong>
        <small>w w w . q u g i z h u . c o m</small>
      </div>
    </div>
  </main>
</template>

<style>
html,
body {
  margin: 0;
  background: #000;
}
</style>

<style scoped>
.screen {
  position: relative;
  min-height: 100vh;
  display: flex;
  flex-direction: column;
  overflow: hidden;
  background: linear-gradient(90deg, #f3cdb0 0, #f7dcc6 20%, #d8dbe4 22%, #cfd6df 70%, #0f7d90 80%, #07505f 100%);
  color: #111;
  font-family: "Noto Sans", "Noto Sans CJK SC", sans-serif;
  font-size: 12px;
}
.screen * {
  box-sizing: border-box;
}
button,
input,
select {
  margin: 0;
  padding: 0;
  border: 0;
  background: none;
  color: inherit;
  font: inherit;
}
button {
  display: flex;
  align-items: center;
  justify-content: center;
}
svg {
  display: block;
  flex: none;
}
.mini :deep(path),
.login :deep(path),
.slot :deep(path),
.cmd :deep(path),
.toggles :deep(path) {
  stroke-width: 2;
}
.cad {
  flex: 1;
  display: flex;
  flex-direction: column;
  margin: 2px 3px 0;
  background: #f5f5f7;
}
.caret {
  flex: none;
  width: 0;
  height: 0;
  border: 3px solid transparent;
  border-top: 4px solid #555;
  border-bottom: 0;
}
.caret.big {
  border-width: 4px;
  border-top-width: 5px;
  border-bottom-width: 0;
}
.caret.east {
  border: 4px solid transparent;
  border-left: 4px solid #555;
  border-right: 0;
}
.caret.up {
  border: 4px solid transparent;
  border-bottom: 4px solid #444;
  border-top: 0;
}
.head {
  display: flex;
  height: 49px;
  padding-left: 3px;
  background: #d9d9db;
  border-bottom: 1px solid #f5f5f7;
}
.logo {
  width: 41px;
  height: 41px;
  margin-top: 4px;
  border: 1px solid #000;
  background: linear-gradient(#c0c0c0, #707070);
}
.logo svg {
  width: 39px;
  height: 39px;
}
.headrows {
  flex: 1;
  min-width: 0;
}
.titlebar {
  display: flex;
  align-items: center;
  height: 30px;
}
.quick {
  display: flex;
  align-items: center;
  padding-left: 5px;
}
.mini {
  width: 24px;
  height: 24px;
}
.mini svg {
  width: 17px;
  height: 17px;
}
.faint {
  opacity: 0.4;
}
.quick .caret {
  margin: 0 3px;
}
.quick .caret.more {
  margin: 0 3px 0 10px;
  border-width: 4px;
  border-top-width: 5px;
  border-bottom-width: 0;
}
h1 {
  flex: 1;
  margin: 0;
  padding: 0 8px 2px 0;
  font-size: 12px;
  font-weight: 400;
  text-align: center;
  color: #444;
}
h1 span {
  margin-left: 16px;
}
.account {
  display: flex;
  align-items: center;
}
.search {
  width: 180px;
  height: 21px;
  margin: 0 1px 0 4px;
  padding: 0 3px;
  border: 1px solid #ccc;
  background: #fff;
  font-size: 12px;
}
.search::placeholder,
.cmd input::placeholder {
  color: #707070;
  font-style: italic;
  opacity: 1;
}
.login {
  gap: 4px;
  margin: 0 60px 0 2px;
  color: #333;
}
.login svg {
  width: 16px;
  height: 16px;
}
.account .mini {
  margin-left: 1px;
}
.login + .caret {
  margin-right: 5px;
}
.account .mini.gap {
  margin: 0 3px 0 21px;
}
.win {
  width: 18px;
  height: 16px;
}
.win svg {
  width: 12px;
  height: 12px;
  fill: none;
  stroke: #444;
}
.titlebar .win {
  width: 25px;
}
.titlebar .first {
  margin-left: 65px;
}
.menubar {
  display: flex;
  gap: 1px;
  height: 18px;
  padding-left: 2px;
  color: #6d6d70;
}
.menubar > button {
  padding: 0 12px 2px;
}
.opened {
  position: relative;
}
.on {
  height: 18px;
  padding: 0 12px 2px;
  background: #fff;
  color: #333;
}
.docwin {
  display: flex;
  margin: 0 3px 0 auto;
}
.drop {
  position: absolute;
  z-index: 5;
  top: 19px;
  left: 0;
  width: 192px;
  padding: 2px 2px 3px;
  border: 1px solid #ccc;
  background: #f1f1f3;
  box-shadow: 2px 2px 2px #0006;
  color: #111;
}
.sect + .sect {
  margin-top: 3px;
  padding-top: 4px;
  background: linear-gradient(#d0d0d2, #d0d0d2) 28px 0 / 100% 1px no-repeat;
}
.entry {
  width: 100%;
  height: 22px;
  justify-content: flex-start;
  text-align: left;
}
.entry.hot {
  background: #8fc6fb;
}
.slot {
  width: 32px;
  padding-left: 3px;
}
.slot svg {
  width: 16px;
  height: 16px;
}
.name {
  position: relative;
  z-index: 2;
  flex: 1;
}
.entry .more {
  width: 6px;
  height: 8px;
  margin-right: 9px;
  fill: none;
  stroke: #333;
}
.glow {
  position: absolute;
  top: 198px;
  left: 52px;
  width: 54px;
  height: 54px;
  border-radius: 50%;
  background: radial-gradient(#ffe97888, #ffe97844 60%, #ffe97800 72%);
}
.pointer {
  position: absolute;
  z-index: 3;
  top: 220px;
  left: 74px;
  width: 13px;
  height: 20px;
  fill: #fff;
  stroke: #222;
}
.doctabs {
  display: flex;
  height: 25px;
  padding: 3px 0 0 23px;
  margin-left: 3px;
  background: #d8d8da;
}
.doctab {
  width: 120px;
  justify-content: flex-start;
  padding-left: 9px;
  border-radius: 8px 12px 0 0;
  background: #e8e8ea;
  color: #666;
  font-size: 12px;
}
.doctab.current {
  width: 125px;
  padding-left: 11px;
  background: #f5f5f7;
  color: #444;
}
.doctab b {
  margin-left: auto;
  margin-right: 16px;
  color: #666;
  font-size: 10px;
}
.plus {
  width: 21px;
  height: 15px;
  margin: 3px 0 0 7px;
  border-radius: 4px 8px 8px 4px;
  background: #e8e8ea;
  color: #555;
  font-size: 16px;
  font-weight: 700;
}
.bars {
  display: flex;
  flex-direction: column;
  gap: 3px;
  padding: 4px 0 4px 3px;
}
.barrow {
  display: flex;
  gap: 1px;
  overflow-x: clip;
}
.bar {
  display: flex;
  flex: none;
  height: 40px;
  padding-right: 1px;
  border: 1px solid #b9b9bd;
}
.grip {
  flex: none;
  width: 4px;
  height: 14px;
  margin: 3px 1px 0 2px;
  background: repeating-linear-gradient(#777 0 1px, #fff0 1px 2px);
  opacity: 0.8;
}
.tool {
  flex: none;
  width: 39px;
  height: 38px;
}
.barrow:nth-child(2) .tool {
  height: 36px;
}
.tool svg {
  width: 32px;
  height: 32px;
  overflow: visible;
}
.tiny {
  width: 9px;
  height: 28px;
}
.sep {
  flex: none;
  width: 6px;
  margin: 2px 0;
  background: linear-gradient(#777, #777) 2px 0 / 1px 100% no-repeat;
}
.combo {
  position: relative;
  flex: none;
  height: 36px;
  border-left: 1px solid #888;
}
.combo select {
  display: block;
  width: 100%;
  height: 26px;
  padding-bottom: 1px;
  border: 1px solid #b4b4b8;
  border-radius: 0 0 3px 3px;
  background: #e3e3e5;
  color: #111;
  appearance: none;
  font-size: 12px;
}
.barrow:nth-child(2) .combo select {
  height: 24px;
}
.combo.off select {
  background: #c9c9cb;
  color: #777;
  opacity: 1;
}
.chev {
  position: absolute;
  top: 10px;
  right: 4px;
  width: 8px;
  height: 5px;
  overflow: visible;
  fill: none;
  stroke: #444;
}
.off .chev {
  stroke: #999;
}
.lead {
  position: absolute;
  top: 0;
  left: 2px;
  display: flex;
  align-items: center;
  height: 22px;
  pointer-events: none;
}
.layer {
  gap: 4px;
  left: 3px;
}
.layer svg {
  width: 15px;
  height: 15px;
}
.swatch {
  width: 14px;
  height: 14px;
  border: 1px solid #222;
  background: #ffe800;
}
.rule {
  width: 36px;
  height: 1px;
  margin-left: 2px;
  background: #000;
}
.work {
  flex: 1;
  display: flex;
  min-height: 780px;
}
.side {
  width: 48px;
  padding-left: 3px;
}
.side.right {
  width: 52px;
  padding: 0 8px 0 3px;
  display: flex;
  flex-direction: column;
  gap: 1px;
  overflow: hidden;
}
.rail {
  flex: none;
  width: 41px;
  padding-top: 3px;
  border: 1px solid #bdb9bd;
}
.rail.cutoff {
  flex: 1 1 0;
  min-height: 0;
  overflow: hidden;
}
.griph {
  display: block;
  width: 14px;
  height: 4px;
  margin: 0 0 1px 3px;
  background: repeating-linear-gradient(90deg, #888 0 1px, #fff0 1px 2px);
}
.rail button {
  width: 39px;
  height: 38px;
  padding-bottom: 1px;
}
.rail svg {
  width: 31px;
  height: 31px;
  overflow: visible;
}
.canvas {
  position: relative;
  flex: 1;
  border-top: 1px solid #000;
  background: #000;
  box-shadow: inset 0 1px #eee;
}
.drawing {
  position: absolute;
  inset: 0;
  width: 100%;
  height: 100%;
  fill: none;
  stroke: #cdbf48;
  stroke-width: 1.3;
}
.cross {
  stroke: #e4e4e4;
  pointer-events: none;
}
.navbar {
  position: absolute;
  top: 2px;
  right: 4px;
  width: 32px;
  height: 240px;
  padding: 19px 5px;
  display: flex;
  flex-direction: column;
  align-items: center;
  gap: 7px;
  border-radius: 3px;
  background: #464646;
}
.navbar svg {
  width: 22px;
  height: 22px;
}
.navbar .caret {
  border-top-color: #222;
}
.cmd {
  position: absolute;
  left: 20%;
  right: 20%;
  bottom: 0;
  display: flex;
  align-items: center;
  height: 27px;
  padding-right: 4px;
  border-radius: 3px 3px 0 0;
  background: #b2b2b2;
}
.cmdhead {
  display: flex;
  align-items: center;
  gap: 7px;
  width: 56px;
  height: 27px;
  background: #9c9c9c;
}
.cmd .grip {
  height: 18px;
  margin: 0 0 0 3px;
  background: repeating-linear-gradient(#333 0 2px, #fff0 2px 3px);
}
.cmdhead b {
  font-size: 12px;
  color: #444;
}
.cmd svg {
  width: 15px;
  height: 15px;
}
.cmd > svg {
  width: 16px;
  margin: 0 3px 0 3px;
}
.cmd input {
  flex: 1;
  margin-left: 7px;
  padding-bottom: 2px;
  font-size: 13px;
}
.cmd input::placeholder {
  color: #555;
}
.status {
  display: flex;
  height: 30px;
  margin-left: 3px;
  padding-left: 8px;
  background: #d8d8da;
}
.sheet {
  width: 52px;
  height: 18px;
  color: #777;
  border-radius: 0 0 8px 8px;
  background: #e0e0e2;
}
.sheet.now {
  background: #f5f5f7;
  color: #222;
  font-weight: 700;
}
.sheet.add {
  width: 32px;
  margin-left: 3px;
  font-size: 14px;
  font-weight: 700;
}
.toggles {
  display: flex;
  align-items: center;
  gap: 2px;
  width: 548px;
  height: 25px;
  margin-left: auto;
  background: #efeff0;
}
.toggles button {
  width: 22px;
  height: 24px;
  border: 1px solid transparent;
}
.toggles .model {
  width: 30px;
  background: #f8f8f8;
}
.toggles svg {
  width: 16px;
  height: 16px;
}
.toggles .caret {
  margin: 0 4px;
}
.toggles .lit {
  border-color: #4a6c9a;
  background: #cfe2fb;
}
.rest {
  display: flex;
  flex: 1;
  justify-content: flex-end;
  padding-right: 54px;
}
.scrub {
  position: relative;
  z-index: 2;
  height: 13px;
  margin-top: -13px;
  background: linear-gradient(#fff0 6px, #434343f2 6px);
}
.scrub input {
  display: block;
  width: 100%;
  height: 6px;
  appearance: none;
  background: linear-gradient(90deg, #ffd700 var(--done), #7a8a9ee6 var(--done));
}
.scrub input::-webkit-slider-thumb {
  appearance: none;
  width: 9px;
  height: 9px;
  border-radius: 50%;
  background: #fff;
}
.player {
  display: flex;
  align-items: center;
  height: 43px;
  padding: 0 250px 7px 16px;
  background: #000;
  color: #fff;
  font-size: 14px;
}
.player button {
  width: 20px;
  height: 20px;
  margin-right: 17px;
}
.player svg {
  width: 20px;
  height: 20px;
  fill: none;
  stroke: #eee;
  stroke-width: 2;
}
.player button:first-child svg,
.player button:nth-child(2) svg {
  width: 16px;
  height: 16px;
  stroke: none;
}
.player text {
  fill: #fff;
  stroke: none;
  font: 700 11px "Liberation Sans", sans-serif;
  text-anchor: middle;
}
.player .solid {
  fill: #fff;
  stroke: none;
}
.time {
  margin-left: 2px;
  font-family: "Liberation Sans", sans-serif;
}
.choices {
  display: flex;
  gap: 10px;
  width: 70px;
  margin-left: auto;
  white-space: nowrap;
}
.choices a {
  flex: none;
  color: #fff;
  text-decoration: none;
}
.brand {
  position: absolute;
  top: 6px;
  right: 10px;
  display: flex;
  align-items: center;
  height: 50px;
  color: transparent;
  font-size: 46px;
  font-weight: 500;
  line-height: 50px;
  -webkit-text-stroke: 1px #9c9ca0;
  text-shadow: 0 0 1px #ffffffaa;
  pointer-events: none;
}
.brand svg {
  width: 66px;
  height: 50px;
  fill: none;
  stroke: #9c9ca0;
  stroke-width: 1.5;
}
.tip {
  position: absolute;
  z-index: 3;
  left: 60px;
  bottom: 72px;
  display: flex;
  flex-direction: column;
  align-items: flex-start;
  width: 320px;
  height: 109px;
  padding: 14px 18px;
  border: 1px solid #3a3c3b;
  border-radius: 2px;
  background: #202322;
  color: #999;
  font-size: 17px;
  line-height: 24px;
}
.tip::after {
  content: "";
  position: absolute;
  top: 107px;
  left: 19px;
  border: 8px solid transparent;
  border-top: 10px solid #202322;
  border-bottom: 0;
}
.tip h2,
.tip p {
  margin: 0;
  color: #fff;
  font-size: 18px;
  font-weight: 400;
  white-space: nowrap;
}
.tip p {
  color: #999;
  font-size: 17px;
  font-family: "Noto Sans CJK SC", sans-serif;
}
.tip button {
  align-self: flex-end;
  margin-top: 7px;
  color: #0078d7;
}
.caption {
  position: absolute;
  z-index: 3;
  left: 0;
  right: 0;
  bottom: 60px;
  margin: 0;
  color: #fff;
  font-size: 38px;
  line-height: 48px;
  text-align: center;
  -webkit-text-stroke: 4px #111;
  paint-order: stroke fill;
  pointer-events: none;
}
.note {
  position: absolute;
  right: 25px;
  top: 50%;
  width: 50px;
  height: 50px;
  flex-direction: column;
  gap: 2px;
  border: 1px solid #888;
  border-radius: 4px;
  background: #00000080;
  color: #fff;
  font-size: 12px;
  font-weight: 700;
}
.note svg {
  width: 20px;
  height: 20px;
}
.bigplay {
  position: absolute;
  z-index: 3;
  right: 20px;
  bottom: 70px;
  width: 60px;
  height: 60px;
  border: 3px solid #fff;
  border-radius: 50%;
  background: radial-gradient(#888c 30%, #444a 60%, #222c);
}
.bigplay svg {
  width: 26px;
  height: 26px;
}
.site {
  position: absolute;
  z-index: 4;
  right: 0;
  bottom: 0;
  display: flex;
  width: 250px;
  height: 65px;
  background: #fff;
}
.site svg {
  width: 66px;
  height: 60px;
  margin: 1px 0 0 -6px;
}
.sitetext {
  display: flex;
  flex-direction: column;
  white-space: nowrap;
  color: #222;
}
.sitetext strong {
  height: 48px;
  font-size: 36px;
  font-weight: 900;
  line-height: 46px;
}
.sitetext small {
  font-family: "Liberation Mono", monospace;
  font-size: 10px;
  font-weight: 700;
  line-height: 14px;
  text-decoration: line-through;
}
</style>
